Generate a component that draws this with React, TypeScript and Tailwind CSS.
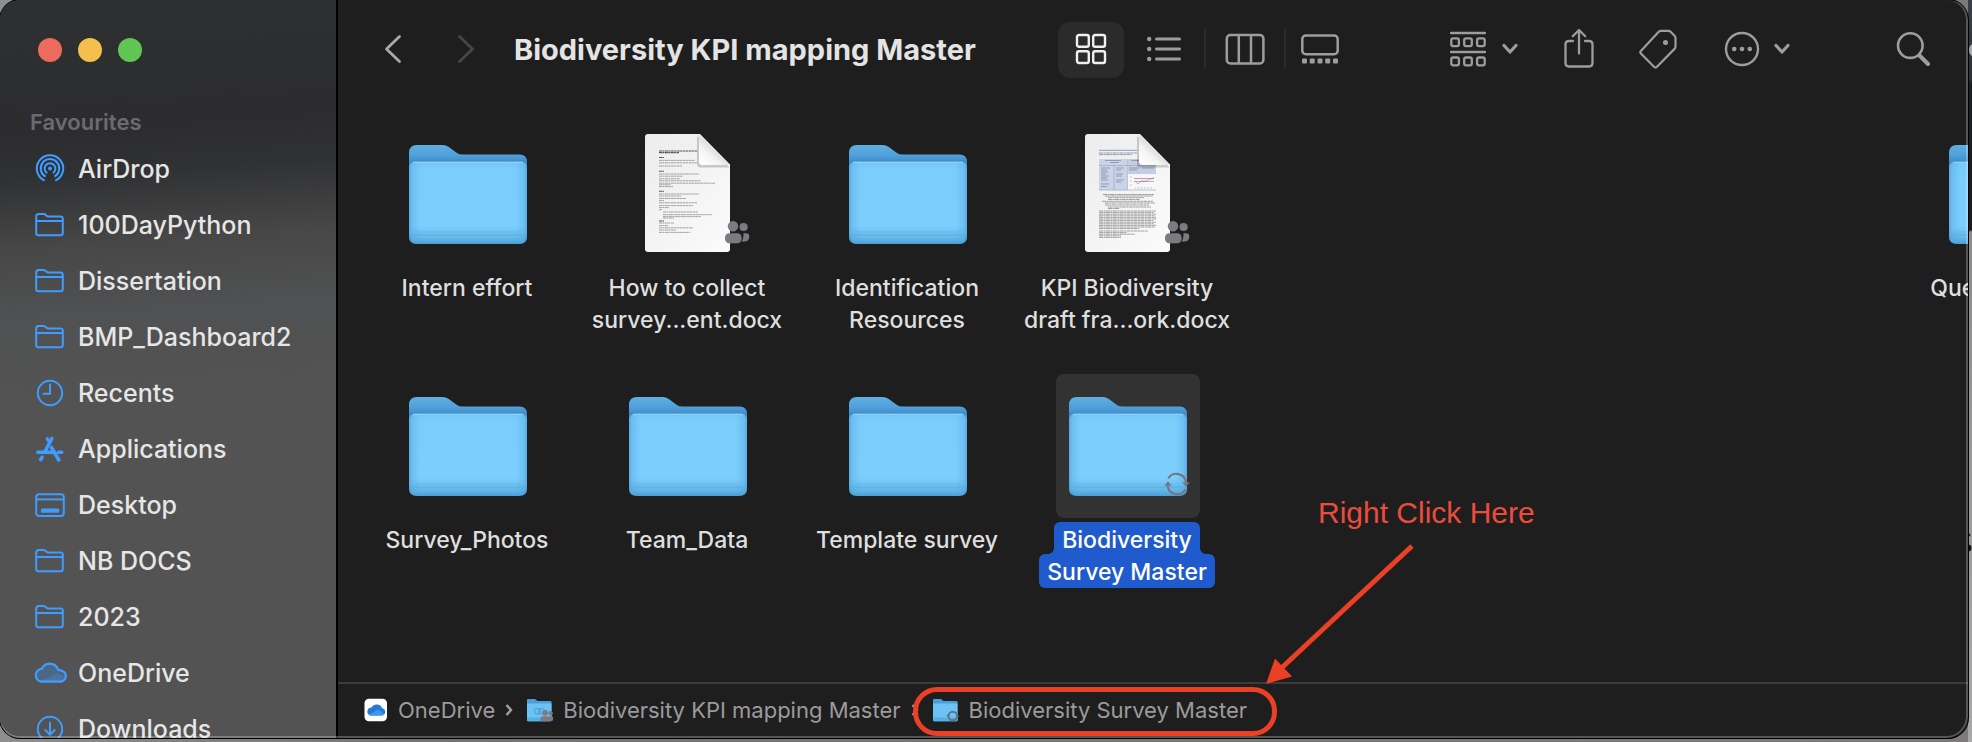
import React from "react";

const BLUE = "#409cff";

function SideFolder() {
  return (
    <>
      <path d="M2.2 25V8.6Q2.2 6 4.8 6h4.6q1.3 0 2.1.8l1 .9q.8.7 2 .7h11.9q2.4 0 2.4 2.4V25q0 2.2-2.2 2.2H4.4Q2.2 27.200 2.2 25z" />
      <path d="M2.200 13h26.600" />
    </>
  );
}

const sideIcons: Record<string, React.ReactNode> = {
  airdrop: (
    <>
      <path d="M10.700 28.600A13.200 13.200 0 1 1 21.300 28.600" />
      <path d="M11.600 24.600A9.300 9.300 0 1 1 20.400 24.600" />
      <path d="M13.200 21.200A5.400 5.400 0 1 1 18.800 21.200" />
      <circle cx="16" cy="16.500" r="1.900" fill={BLUE} stroke="none" />
    </>
  ),
  folder: <SideFolder />,
  clock: (
    <>
      <circle cx="16" cy="17" r="12.200" />
      <path d="M16 8.500V17.800H9.500" strokeLinecap="round" />
    </>
  ),
  apps: (
    <>
      <path d="M17.900 6.500 11 19.500M3.800 20.200h14.800M24.500 20.200h3.200M17.500 15.500l7.300 12.500M8 25.400l-1.300 2.300" strokeWidth="3.600" strokeLinecap="round" />
      <path d="M13.300 6.600l1.500 2.600" strokeWidth="3.200" strokeLinecap="round" />
    </>
  ),
  desktop: (
    <>
      <rect x="2.200" y="6.200" width="27.600" height="21.800" rx="3" />
      <path d="M2.200 11.400h27.600" />
      <rect x="7" y="20.500" width="18.200" height="4.200" rx="1" fill={BLUE} stroke="none" />
    </>
  ),
  cloud: (
    <>
      <path
        d="M6.800 25.600H25.700a5.600 5.600 0 0 0 1-11.200 3.500 3.500 0 0 0-2.600-.6 8.800 8.800 0 0 0-16.300-1A6.500 6.500 0 0 0 6.800 25.600z"
        fill="#4a6785"
      />
      <path d="M7 24.700 23 17l7.500 4-4.500 3.700z" fill="#4b73a3" stroke="none" />
      <path d="M6.800 25.600H25.700a5.600 5.600 0 0 0 1-11.200 3.500 3.500 0 0 0-2.600-.6 8.800 8.800 0 0 0-16.300-1A6.500 6.500 0 0 0 6.800 25.600z" />
    </>
  ),
  download: (
    <>
      <circle cx="16" cy="17" r="12.200" />
      <path d="M16 10.500v12M11.300 18l4.700 4.700 4.700-4.700" strokeLinecap="round" strokeLinejoin="round" />
    </>
  ),
};

const favourites = [
  { name: "AirDrop", icon: "airdrop" },
  { name: "100DayPython", icon: "folder" },
  { name: "Dissertation", icon: "folder" },
  { name: "BMP_Dashboard2", icon: "folder" },
  { name: "Recents", icon: "clock" },
  { name: "Applications", icon: "apps" },
  { name: "Desktop", icon: "desktop" },
  { name: "NB DOCS", icon: "folder" },
  { name: "2023", icon: "folder" },
  { name: "OneDrive", icon: "cloud" },
  { name: "Downloads", icon: "download" },
];

function Sidebar() {
  return (
    <aside className="flex w-[338px] shrink-0 flex-col overflow-hidden border-r-2 border-black bg-[linear-gradient(176deg,#2d3032_0px,#2c2c2e_130px,#303133_180px,#474747_250px,#505152_320px,#535353_420px)]">
      <div className="flex h-25 shrink-0 items-center gap-4 pl-[38px]">
        <button aria-label="Close" className="size-6 rounded-full bg-[#ed6a5e]" />
        <button aria-label="Minimise" className="size-6 rounded-full bg-[#f5bf4f]" />
        <button aria-label="Zoom" className="size-6 rounded-full bg-[#61c554]" />
      </div>
      <h2 className="flex h-10 shrink-0 items-center pt-1 pl-[30px] text-[22px] font-semibold text-[#6b6b6d]">Favourites</h2>
      <nav className="flex flex-col">
        {favourites.map((f) => (
          <a key={f.name} href="#" className="flex h-14 shrink-0 items-center gap-3 pl-[34px] text-[25px] font-medium text-[#e6e6e6]">
            <svg viewBox="0 0 32 32" className="size-8 shrink-0 overflow-visible" fill="none" stroke={BLUE} strokeWidth="2">
              {sideIcons[f.icon]}
            </svg>
            <span className="pt-[3px]">{f.name}</span>
          </a>
        ))}
      </nav>
    </aside>
  );
}

function Chevron() {
  return (
    <svg viewBox="0 0 16 12" className="h-3 w-4" fill="none" stroke="currentColor" strokeWidth="3.200" strokeLinecap="round" strokeLinejoin="round">
      <path d="M2 2.500 8 9l6-6.500" />
    </svg>
  );
}

function Toolbar() {
  return (
    <header className="flex h-25 shrink-0 items-center pr-9 pb-0.5 pl-[37px] text-[#9d9d9d]">
      <button aria-label="Back" className="flex w-9 justify-center">
        <svg viewBox="0 0 18 30" className="h-[30px] w-[18px]" fill="none" stroke="#a9a9a9" strokeWidth="2.800" strokeLinecap="round" strokeLinejoin="round">
          <path d="M15.500 2.500 2.500 15l13 12.500" />
        </svg>
      </button>
      <button aria-label="Forward" className="ml-[37px] flex w-9 justify-center">
        <svg viewBox="0 0 18 30" className="h-[30px] w-[18px]" fill="none" stroke="#474747" strokeWidth="2.800" strokeLinecap="round" strokeLinejoin="round">
          <path d="M2.500 2.500 15.500 15l-13 12.500" />
        </svg>
      </button>
      <h1 className="min-w-0 flex-1 truncate pt-0.5 pl-[30px] text-[29px] font-bold text-[#e4e4e4]">Biodiversity KPI mapping Master</h1>

      <div className="mr-24 flex items-center">
        <button aria-label="Icon view" className="mt-0.5 flex h-14 w-[66px] items-center justify-center rounded-xl bg-[#2b2b2b] text-[#f0f0f0]">
          <svg viewBox="0 0 32 32" className="mb-0.5 size-8" fill="none" stroke="currentColor" strokeWidth="2.400">
            <rect x="2" y="2" width="11.800" height="11.800" rx="2" />
            <rect x="18.200" y="2" width="11.800" height="11.800" rx="2" />
            <rect x="2" y="18.200" width="11.800" height="11.800" rx="2" />
            <rect x="18.200" y="18.200" width="11.800" height="11.800" rx="2" />
          </svg>
        </button>
        <button aria-label="List view" className="flex w-20 justify-center">
          <svg viewBox="0 0 34 26" className="h-[26px] w-[34px]" fill="currentColor">
            <circle cx="2.200" cy="3" r="2.200" />
            <circle cx="2.200" cy="13" r="2.200" />
            <circle cx="2.200" cy="23" r="2.200" />
            <rect x="8" y="1.500" width="26" height="3" rx="1.500" />
            <rect x="8" y="11.500" width="26" height="3" rx="1.500" />
            <rect x="8" y="21.500" width="26" height="3" rx="1.500" />
          </svg>
        </button>
        <span className="h-10 w-0.5 bg-[#2b2b2b]" />
        <button aria-label="Column view" className="flex w-[78px] justify-center">
          <svg viewBox="0 0 40 32" className="h-8 w-10" fill="none" stroke="currentColor" strokeWidth="2.500">
            <rect x="1.800" y="2" width="36.600" height="28.400" rx="3.500" />
            <path d="M13.800 2v28M26 2v28" />
          </svg>
        </button>
        <span className="h-10 w-0.5 bg-[#2b2b2b]" />
        <button aria-label="Gallery view" className="flex w-[68px] justify-center">
          <svg viewBox="0 0 38 30" className="h-[30px] w-[38px]" fill="currentColor">
            <rect x="1.300" y="1.600" width="35.400" height="18.600" rx="3.500" fill="none" stroke="currentColor" strokeWidth="2.500" />
            <rect x="1" y="24.500" width="5" height="5" rx="1" />
            <rect x="8.700" y="24.500" width="5" height="5" rx="1" />
            <rect x="16.500" y="24.500" width="5" height="5" rx="1" />
            <rect x="24.200" y="24.500" width="5" height="5" rx="1" />
            <rect x="32" y="24.500" width="5" height="5" rx="1" />
          </svg>
        </button>
      </div>

      <div className="flex items-center gap-[46px]">
        <button aria-label="Group items" className="flex w-17 items-center justify-between">
          <svg viewBox="0 0 36 36" className="size-9" fill="none" stroke="currentColor" strokeWidth="2.300">
            <path d="M1 2h34M1 21h34" strokeLinecap="round" />
            <rect x="1.300" y="7.300" width="7.600" height="7.800" rx="1.800" />
            <rect x="14.200" y="7.300" width="7.600" height="7.800" rx="1.800" />
            <rect x="27.100" y="7.300" width="7.600" height="7.800" rx="1.800" />
            <rect x="1.300" y="26.500" width="7.600" height="7.800" rx="1.800" />
            <rect x="14.200" y="26.500" width="7.600" height="7.800" rx="1.800" />
            <rect x="27.100" y="26.500" width="7.600" height="7.800" rx="1.800" />
          </svg>
          <Chevron />
        </button>
        <button aria-label="Share" className="flex w-[30px] justify-center pb-0.5">
          <svg viewBox="0 0 30 40" className="h-10 w-[30px]" fill="none" stroke="currentColor" strokeWidth="2.300" strokeLinecap="round" strokeLinejoin="round">
            <path d="M9 13H5q-3.500 0-3.500 3.500V35q0 3.500 3.500 3.500h20q3.500 0 3.500-3.500V16.500Q28.500 13 25 13h-4" />
            <path d="M15 25.500V2.200M8.800 8.300 15 2l6.200 6.300" />
          </svg>
        </button>
        <button aria-label="Tags" className="flex w-9 justify-center">
          <svg viewBox="0 0 38 40" className="h-10 w-[38px] shrink-0" fill="none" stroke="currentColor" strokeWidth="2.200" strokeLinejoin="round">
            <path d="M1.900 21.900 19.700 2.800q1-1 2.400-1h7.300q1.300 0 2.200.9l3.900 4q1 1 1 2.300v8.500q0 1.400-1 2.400L18 37.800q-1.500 1.500-3 0L1.900 24.400q-1.100-1.200 0-2.500z" />
            <circle cx="26.500" cy="13.500" r="2.500" fill="currentColor" stroke="none" />
          </svg>
        </button>
        <button aria-label="More" className="flex w-17 items-center justify-between pl-0.5">
          <svg viewBox="0 0 36 36" className="size-9" fill="currentColor">
            <circle cx="18" cy="18" r="16" fill="none" stroke="currentColor" strokeWidth="2.400" />
            <circle cx="10.200" cy="18" r="2.300" />
            <circle cx="18" cy="18" r="2.300" />
            <circle cx="25.800" cy="18" r="2.300" />
          </svg>
          <Chevron />
        </button>
      </div>
      <button aria-label="Search" className="ml-[106px] flex w-9 justify-center">
        <svg viewBox="0 0 36 36" className="size-9" fill="none" stroke="currentColor" strokeLinecap="round">
          <circle cx="14.300" cy="14.600" r="12.300" strokeWidth="2.600" />
          <path d="m23.500 24.500 8.500 8.500" strokeWidth="4" />
        </svg>
      </button>
    </header>
  );
}

function FolderShape() {
  return (
    <>
      <path
        d="M13 115V31q0-8 8-8h25.500q3.500 0 6.300 2.100l7.400 5.300q3 2.200 6.800 2.200H123.500q7.500 0 7.500 7.500V115z"
        fill="url(#folderBack)"
      />
      <path d="M13 114V46.500q0-6.800 6.800-6.800h104.400q6.800 0 6.800 6.800V114q0 8-8 8H21q-8 0-8-8z" fill="url(#folderFront)" />
      <path d="M13 114V46.500q0-6.800 6.800-6.800h104.400q6.800 0 6.800 6.800V114q0 8-8 8H21q-8 0-8-8z" fill="url(#folderSides)" />
      <path d="M13.500 110h117" stroke="#67b8e8" strokeWidth="1" />
      <path d="M13.500 113h117" stroke="#5badde" strokeWidth="1.200" />
      <path d="M17 40.300h110" stroke="#93d6fb" strokeWidth="1" />
    </>
  );
}

function People() {
  return (
    <g fill="#7d7b80">
      <circle cx="118" cy="104.300" r="5.200" />
      <circle cx="128.600" cy="105" r="4.100" />
      <path d="M128.500 111.300h2.500q3.300 0 3.300 3.300 0 5-5.300 5h-2.500q2.300-2.500 2-8.300z" />
      <rect x="110" y="111.300" width="16.600" height="10" rx="4.200" />
    </g>
  );
}

function DocShape({ children }: { children: React.ReactNode }) {
  return (
    <g transform="translate(-1 0)">
      <path d="M30 15q0-3 3-3h52l30 30.500V127q0 3-3 3H33q-3 0-3-3z" fill="url(#paper)" />
      {children}
      <path d="M82 14v28q0 3.500 3.500 3.500h29z" fill="#000" opacity=".18" />
      <path d="M84 12.500v27q0 3.500 3.500 3.500h27.200z" fill="url(#curl)" />
      <People />
    </g>
  );
}

const notes: [number, number, number, boolean?][] = [
  [44, 29, 38, true], [44, 30.6, 20, true], [44, 35.5, 5, true], [44, 38.4, 36], [44, 40.8, 38], [44, 44, 23],
  [44, 49.3, 5, true], [44, 52, 40], [44, 54.2, 24], [44, 56.8, 21], [44, 58.8, 42], [44, 61.2, 56], [44, 62.8, 12],
  [44, 64.600, 14], [44, 69.3, 5, true], [44, 72, 40], [44, 74, 22], [44, 76.5, 27], [44, 78.6, 5], [44, 80.8, 38],
  [44, 83.6, 34], [44, 85.6, 10], [44, 87.6, 3], [48, 90, 35], [48, 92.7, 49], [48, 94.6, 38], [48, 96, 11],
  [44, 99, 5, true], [44, 101, 15], [44, 103.6, 9], [44, 105.8, 34], [44, 108, 17], [44, 110.400, 31],
];

const framework: [number, number, number][] = [
  [44, 31, 38], [44, 32.6, 33], [48, 72.5, 51], [50, 74, 48], [53, 75.7, 36], [53, 77.5, 32], [47, 79.3, 51],
  [50, 81, 50], [50, 83, 44], [53, 85, 43], [53, 86.5, 11], [44, 89, 57], [44, 90.6, 55], [44, 92.2, 57],
  [44, 93.800, 56], [44, 95.4, 57], [44, 97, 57], [44, 98.6, 54], [44, 100.2, 57], [44, 101.8, 55], [44, 103.4, 57],
  [44, 105, 56], [44, 106.600, 40], [44, 109, 49], [44, 110.6, 28], [44, 112.2, 36], [44, 113.800, 22], [44, 115.4, 22],
];

function NotesDoc() {
  return (
    <DocShape>
      {notes.map(([x, y, w, bold]) => (
        <path key={y} d={`M${x} ${y}h${w}`} stroke={bold ? "#555" : "#8e8e8e"} strokeWidth={bold ? 1.1 : 0.8} strokeDasharray="3 .4 2 .5" />
      ))}
    </DocShape>
  );
}

function FrameworkDoc() {
  return (
    <DocShape>
      <path d="M44 28.300h38" stroke="#7da0cf" strokeWidth="1" />
      <rect x="44" y="37" width="28" height="31" fill="#c9d3e9" />
      <rect x="73" y="37" width="28" height="15" fill="#c3cde4" />
      <rect x="73" y="52" width="28" height="16" fill="#f7f7f9" />
      <path d="M44 43.500h57M59 43.500V68M72.500 37v31M44 68h57" stroke="#98a3bb" strokeWidth=".6" fill="none" />
      <path d="M50 38.500h16M55 40.500h9M76 38.500h12M46 46h9M46 48h6M46 50h7M46 52h5M46 54h8M46 56h6M46 58h7M46 62h8M46 64.500h6M61 46h8M61 48h5M61 52h7M61 54h6M61 58h8M61 60h5M74 46h10M74 48h8M87 46h12" stroke="#7d8598" strokeWidth=".7" fill="none" />
      <path d="M79 56.500h20" stroke="#e88e8e" strokeWidth="1" />
      <path d="M79 59.500h20" stroke="#9aa5c4" strokeWidth=".8" />
      <path d="m80 59 3 3 3-3h6l3-2 3-.5 1-1.500" stroke="#7b86a3" strokeWidth=".6" fill="none" />
      <path d="M80 66h18M75 55h2M75 59h2M75 63h2" stroke="#aaa" strokeWidth=".8" strokeDasharray="1.500 1.500" />
      {framework.map(([x, y, w]) => (
        <path key={y} d={`M${x} ${y}h${w}`} stroke="#8a8a8a" strokeWidth=".8" strokeDasharray="4 .5 2 .4" />
      ))}
    </DocShape>
  );
}

function Sync() {
  return (
    <g fill="none" stroke="#75787e" strokeWidth="2.200">
      <path d="M112.200 104.500a9.600 9.600 0 0 1 17.800 4" />
      <path d="M129.400 115.500a9.600 9.600 0 0 1-17.800-4" />
      <path d="M126.300 108.300h7.400l-3.700 4.400zM108.300 111.700h7.400l-3.700-4.400z" fill="#75787e" stroke="none" />
    </g>
  );
}

type Item = { lines: string[]; kind: "folder" | "notes" | "framework"; selected?: boolean; last?: boolean };

const items: Item[] = [
  { lines: ["Intern effort"], kind: "folder" },
  { lines: ["How to collect", "survey...ent.docx"], kind: "notes" },
  { lines: ["Identification", "Resources"], kind: "folder" },
  { lines: ["KPI Biodiversity", "draft fra...ork.docx"], kind: "framework" },
  { lines: ["Questionnaire"], kind: "folder", last: true },
  { lines: ["Survey_Photos"], kind: "folder" },
  { lines: ["Team_Data"], kind: "folder" },
  { lines: ["Template survey"], kind: "folder" },
  { lines: ["Biodiversity", "Survey Master"], kind: "folder", selected: true },
];

function GridItem({ item }: { item: Item }) {
  return (
    <button className={item.last ? "col-start-8 flex flex-col items-center" : "flex flex-col items-center"}>
      <span className={item.selected ? "rounded-lg bg-[#323232]" : "rounded-lg"}>
        <svg viewBox="0 0 144 144" className="size-36">
          {item.kind === "folder" && <FolderShape />}
          {item.kind === "notes" && <NotesDoc />}
          {item.kind === "framework" && <FrameworkDoc />}
          {item.selected && <Sync />}
        </svg>
      </span>
      <span
        className={
          item.selected
            ? "mt-1 flex flex-col items-center pr-0.5 whitespace-nowrap text-white"
            : "mt-1 flex flex-col items-center pr-0.5 whitespace-nowrap text-[#dfdfdf]"
        }
      >
        {item.lines.map((line, i) => (
          <span
            key={line}
            className={
              item.selected
                ? i === 0
                  ? "relative h-8 rounded-t-md bg-[#1f5bcc] px-2 pt-0.5 before:absolute before:bottom-0 before:-left-1.5 before:size-1.5 before:bg-[radial-gradient(circle_at_0_0,transparent_6px,#1f5bcc_6px)] after:absolute after:-right-1.5 after:bottom-0 after:size-1.5 after:bg-[radial-gradient(circle_at_100%_0,transparent_6px,#1f5bcc_6px)]"
                  : "rounded-md bg-[#1f5bcc] px-2 pt-0.5"
                : "h-8 px-2 pt-0.5"
            }
          >
            {line}
          </span>
        ))}
      </span>
    </button>
  );
}

function MiniFolder({ badge }: { badge: "people" | "sync" }) {
  return (
    <svg viewBox="0 0 26 24" className="h-6 w-[26px] shrink-0">
      <path d="M0 22V2q0-1 1-1h7l2.500 2H23.500q1 0 1 1v18z" fill="#4b9fd8" />
      <path d="M0 5.500h24.500V22q0 1.300-1.300 1.300H1.300Q0 23.300 0 22z" fill="#6cc2f3" />
      <path d="M0 19.500h24.500V22q0 1.300-1.300 1.300H1.300Q0 23.300 0 22z" fill="#57aee4" />
      {badge === "people" ? (
        <>
          <g fill="none" stroke="#4793c6" strokeWidth=".9">
            <rect x="7.500" y="10.500" width="6" height="5.500" rx="2.700" />
            <rect x="11.500" y="10.500" width="6" height="5.500" rx="2.700" />
          </g>
          <g fill="#7d7b80">
            <circle cx="18.200" cy="14.800" r="2.900" />
            <circle cx="23.600" cy="15.200" r="2.200" />
            <rect x="13.500" y="18.300" width="9.300" height="5" rx="2.200" />
            <rect x="21" y="18.300" width="5.400" height="4.600" rx="2" />
          </g>
        </>
      ) : (
        <g fill="none" stroke="#5f7384" strokeWidth="1.900">
          <circle cx="19.800" cy="18" r="4.300" />
          <path d="m14 18 2.500-1.500M25.600 17.500 23.500 19" />
        </g>
      )}
    </svg>
  );
}

function PathArrow() {
  return (
    <svg viewBox="0 0 8 14" className="mr-3.5 ml-2.5 h-3.5 w-2 shrink-0" fill="none" stroke="#a0a0a0" strokeWidth="2.400">
      <path d="m1.500 2 4.500 5-4.500 5" />
    </svg>
  );
}

function PathBar() {
  return (
    <nav aria-label="Path" className="flex h-14 shrink-0 items-center border-t-2 border-[#3b3b3b] pb-0.5 pl-[26px] text-[22px] whitespace-nowrap text-[#9b9b9b]">
      <a href="#" className="flex items-center gap-2.5">
        <svg viewBox="0 0 24 24" className="size-6 shrink-0">
          <rect x=".500" y=".800" width="22.500" height="22.500" rx="4.500" fill="#fff" />
          <path d="M6.500 17.500h11.200a3.700 3.700 0 0 0 .6-7.300A6 6 0 0 0 7.500 9.600a4 4 0 0 0-1 7.900z" fill="#2a78d0" />
          <path d="M4.500 17 14 11.500l6.500 4.500q-1 1.500-2.800 1.500H6.500z" fill="#3b98ec" />
        </svg>
        OneDrive
      </a>
      <PathArrow />
      <a href="#" className="flex items-center gap-2.5">
        <MiniFolder badge="people" />
        Biodiversity KPI mapping Master
      </a>
      <PathArrow />
      <a href="#" className="relative flex items-center gap-2.5">
        <MiniFolder badge="sync" />
        Biodiversity Survey Master
        <span className="absolute -top-[7px] -right-[30px] -bottom-[9px] -left-5 rounded-[24px] border-5 border-[#ec4026]" />
      </a>
    </nav>
  );
}

function Annotation() {
  return (
    <div className="pointer-events-none absolute bottom-[53px] left-[928px] flex flex-col">
      <p className="pl-[52px] font-['Liberation_Sans',sans-serif] text-[30px] leading-8 whitespace-nowrap text-[#ec4c3c]">Right Click Here</p>
      <svg viewBox="0 0 150 156" className="h-[156px] w-[150px]">
        <path d="M146 17 16 138.500" stroke="#ec4026" strokeWidth="5" />
        <path d="M0 155 9 129.500 26 147.500z" fill="#ec4026" />
      </svg>
    </div>
  );
}

export default function App() {
  return (
    <div className="flex h-screen overflow-hidden bg-[linear-gradient(90deg,#8f8f8f_0%,#767373_20%,#7c7a7a_100%)] font-['Inter','Liberation_Sans',sans-serif]">
      <svg width="0" height="0" className="absolute" aria-hidden="true">
        <defs>
          <linearGradient id="folderBack" x1="0" y1="23" x2="0" y2="42" gradientUnits="userSpaceOnUse">
            <stop offset="0" stopColor="#60b0e3" />
            <stop offset=".55" stopColor="#4f9fd9" />
            <stop offset="1" stopColor="#3c86c8" />
          </linearGradient>
          <linearGradient id="folderFront" x1="0" y1="39" x2="0" y2="122" gradientUnits="userSpaceOnUse">
            <stop offset="0" stopColor="#74c6f6" />
            <stop offset=".1" stopColor="#7bcdfc" />
            <stop offset=".78" stopColor="#7ccffd" />
            <stop offset=".88" stopColor="#6dc0f0" />
            <stop offset=".93" stopColor="#63b7e9" />
            <stop offset="1" stopColor="#4a9fd8" />
          </linearGradient>
          <linearGradient id="folderSides" x1="13" y1="0" x2="131" y2="0" gradientUnits="userSpaceOnUse">
            <stop offset="0" stopColor="#3f94cf" stopOpacity=".6" />
            <stop offset=".03" stopColor="#4aa0da" stopOpacity=".3" />
            <stop offset=".1" stopColor="#4aa0da" stopOpacity="0" />
            <stop offset=".9" stopColor="#4aa0da" stopOpacity="0" />
            <stop offset=".97" stopColor="#4aa0da" stopOpacity=".3" />
            <stop offset="1" stopColor="#3f94cf" stopOpacity=".6" />
          </linearGradient>
          <linearGradient id="paper" x1="0" y1="0" x2="1" y2="1">
            <stop offset="0" stopColor="#ececec" />
            <stop offset="1" stopColor="#fbfbfb" />
          </linearGradient>
          <linearGradient id="curl" x1="86" y1="42" x2="100" y2="27" gradientUnits="userSpaceOnUse">
            <stop offset="0" stopColor="#fff" />
            <stop offset=".6" stopColor="#f4f4f4" />
            <stop offset="1" stopColor="#dcdcdc" />
          </linearGradient>
        </defs>
      </svg>
      <div className="relative mb-1 flex min-w-0 flex-1 overflow-hidden rounded-[20px] bg-[#1e1e1e] shadow-[0_0_0_1px_#000]">
        <Sidebar />
        <main className="relative flex min-w-0 flex-1 flex-col">
          <Toolbar />
          <div className="grid min-h-0 flex-1 auto-rows-[252px] grid-cols-[repeat(8,220px)] content-start overflow-hidden pt-[22px] pl-5 text-[23px] leading-8 font-medium">
            {items.map((item) => (
              <GridItem key={item.lines.join(" ")} item={item} />
            ))}
          </div>
          <PathBar />
          <Annotation />
        </main>
        <div className="pointer-events-none absolute -top-0.5 right-0 bottom-0 -left-0.5 rounded-[22px] border-2 border-white/25" />
      </div>
      <div className="w-1 shrink-0 bg-[linear-gradient(180deg,#3a4048_0px,#2c2f36_80px,#1b1d22_84px,#1b1d22_230px,#8c8c8c_232px,#a8a8a8_100%)]">
        <svg viewBox="0 0 4 742" className="h-[742px] w-1" aria-hidden="true">
          <path d="M4 38v18q-3-2-3-6t3-6z" fill="#a9abae" />
          <circle cx="1" cy="535" r="1.500" fill="#222" />
          <circle cx="0" cy="548" r="3.500" fill="#111" />
        </svg>
      </div>
    </div>
  );
}
